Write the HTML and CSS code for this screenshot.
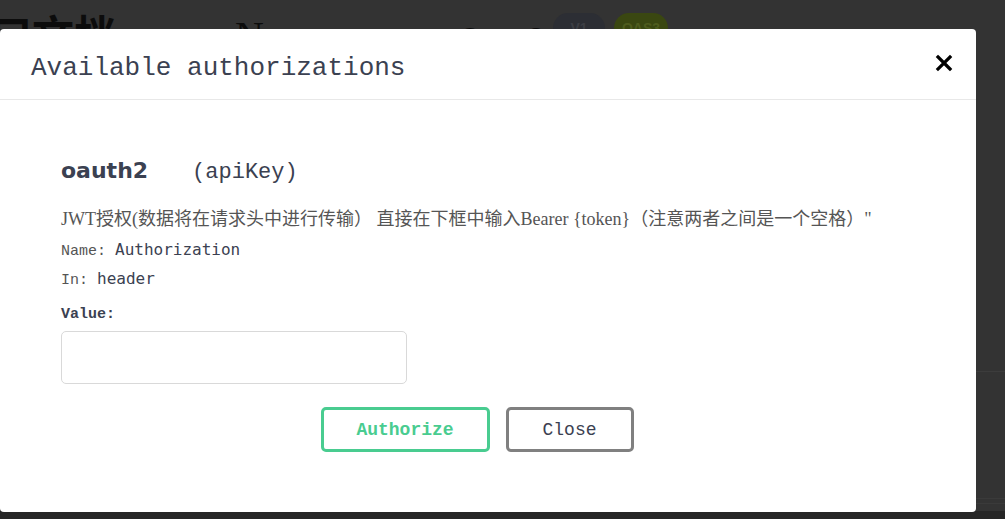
FILE: index.html
```html
<!DOCTYPE html>
<html lang="zh-CN">

<head>
    <meta charset="utf-8">
    <meta name="viewport" content="width=device-width, initial-scale=1">
    <title>接口文档</title>
    <link rel="stylesheet" href="styles.css">
</head>

<body>
    <div class="page">
        <header class="info">
            <h2 class="info__title">接口文档</h2>
            <span class="info__name">Nexus</span>
            <span class="info__ver">2.0</span>
            <span class="badge badge--v">V1</span>
            <span class="badge badge--oas">OAS3</span>
        </header>
        <div class="page__block page__block--ops"></div>
        <div class="page__block page__block--models"></div>
        <div class="page__block page__block--thin"></div>
        <div class="page__footer"></div>
    </div>

    <div class="backdrop">
        <div class="modal">
            <div class="modal__head">
                <h3 class="modal__title">Available authorizations</h3>
                <button class="modal__close" type="button" aria-label="Close">
                    <svg width="18" height="18" viewBox="0 0 18 18">
                        <path d="M3 3 L15 15 M15 3 L3 15" stroke="#000" stroke-width="3.2" stroke-linecap="square" fill="none"/>
                    </svg>
                </button>
            </div>
            <div class="modal__body">
                <h4 class="auth-name">oauth2<span class="auth-name__type">(apiKey)</span></h4>
                <p class="auth-desc">JWT授权(数据将在请求头中进行传输） 直接在下框中输入Bearer {token}（注意两者之间是一个空格）"</p>
                <div class="auth-rows">
                    <p class="auth-row">Name: <code>Authorization</code></p>
                    <p class="auth-row">In: <code>header</code></p>
                </div>
                <label class="auth-label" for="api-key">Value:</label>
                <input class="auth-input" id="api-key" type="text">
                <div class="auth-btns">
                    <button class="btn btn--authorize" type="button">Authorize</button>
                    <button class="btn btn--close" type="button">Close</button>
                </div>
            </div>
        </div>
    </div>
</body>

</html>
```

FILE: styles.css
```css
*,
*:before,
*:after {
    box-sizing: border-box;
}

html,
body {
    margin: 0;
    height: 100%;
}

body {
    background: #333;
    color: #3b4151;
    font-family: "Liberation Mono", monospace;
    overflow: hidden;
}

/* page behind the dimmed backdrop */
.page {
    height: 100%;
}

.info {
    display: flex;
    align-items: flex-start;
    height: 60px;
    padding-top: 12px;
    overflow: hidden;
}

.info__title {
    flex: none;
    width: 168px;
    margin: 0 0 0 -52px;
    font: bold 42px/1 "Noto Sans CJK SC", sans-serif;
    color: #0c0c0c;
    white-space: nowrap;
}

.info__name {
    flex: none;
    width: 200px;
    margin-left: 119px;
    margin-top: 4px;
    font: 40px/1 "Liberation Serif", serif;
    color: #0c0c0c;
}

.info__ver {
    flex: none;
    width: 90px;
    margin-left: 25px;
    margin-top: 12px;
    font: bold 36px/1 "Liberation Sans", sans-serif;
    color: #0c0c0c;
    letter-spacing: 18px;
}

.badge {
    flex: none;
    height: 30px;
    margin-top: 1px;
    border-radius: 15px;
    font: bold 14px/30px "Liberation Sans", sans-serif;
    text-align: center;
}

.badge--v {
    width: 52px;
    margin-left: 3px;
    background: #2c2e34;
    color: #3c3e44;
}

.badge--oas {
    width: 54px;
    margin-left: 9px;
    background: #3a4711;
    color: #4e5c1e;
}

.page__block--ops {
    height: 312px;
    border-bottom: 1px solid #3c3c3c;
}

.page__block--models {
    height: 127px;
    border-bottom: 1px solid #3a3a3a;
}

.page__block--thin {
    height: 5px;
    border-bottom: 1px solid #3a3a3a;
}

.page__footer {
    height: 20px;
    margin-top: 7px;
    background: #262626;
}

/* modal */
.backdrop {
    position: fixed;
    inset: 0;
}

.modal {
    width: 976px;
    margin-top: 29px;
    background: #fff;
    border-radius: 4px;
}

.modal__head {
    display: flex;
    align-items: center;
    justify-content: space-between;
    height: 71px;
    padding: 0 23px 0 31px;
    border-bottom: 1px solid #e8e8e8;
}

.modal__title {
    margin: 8px 0 0;
    font-size: 26px;
    font-weight: normal;
    color: #3b4151;
}

.modal__close {
    display: flex;
    padding: 0;
    margin-top: -2px;
    border: 0;
    background: none;
}

.modal__body {
    padding: 56px 61px 60px;
}

.auth-name {
    margin: 0;
    height: 30px;
    font: bold 22px/30px "DejaVu Sans", sans-serif;
    color: #3b4151;
}

.auth-name__type {
    margin-left: 44px;
    font: normal 22px/30px "Liberation Mono", monospace;
}

.auth-desc {
    margin: 18px 0 0;
    height: 30px;
    font: 18px/30px "Liberation Serif", "Noto Sans CJK SC", serif;
    color: #555;
    white-space: nowrap;
}

.auth-rows {
    padding-top: 3px;
}

.auth-row {
    margin: 0;
    height: 29px;
    font: 15px/29px "Liberation Mono", monospace;
    color: #555;
}

.auth-row code {
    font: 16px/1 "DejaVu Sans Mono", monospace;
    color: #3b4151;
}

.auth-label {
    display: block;
    margin-top: 10px;
    font: bold 15px/20px "Liberation Mono", monospace;
    color: #3b4151;
}

.auth-input {
    display: block;
    width: 346px;
    height: 53px;
    margin-top: 6px;
    border: 1px solid #d9d9d9;
    border-radius: 5px;
    background: #fff;
}

.auth-btns {
    display: flex;
    justify-content: center;
    gap: 16px;
    margin-top: 23px;
}

.btn {
    height: 45px;
    border: 3px solid #808080;
    border-radius: 5px;
    background: #fff;
    font: 18px "Liberation Mono", monospace;
    color: #3b4151;
}

.btn--authorize {
    width: 169px;
    border-color: #49cc90;
    color: #49cc90;
    font-weight: bold;
}

.btn--close {
    width: 128px;
    margin-right: 22px;
}
```
